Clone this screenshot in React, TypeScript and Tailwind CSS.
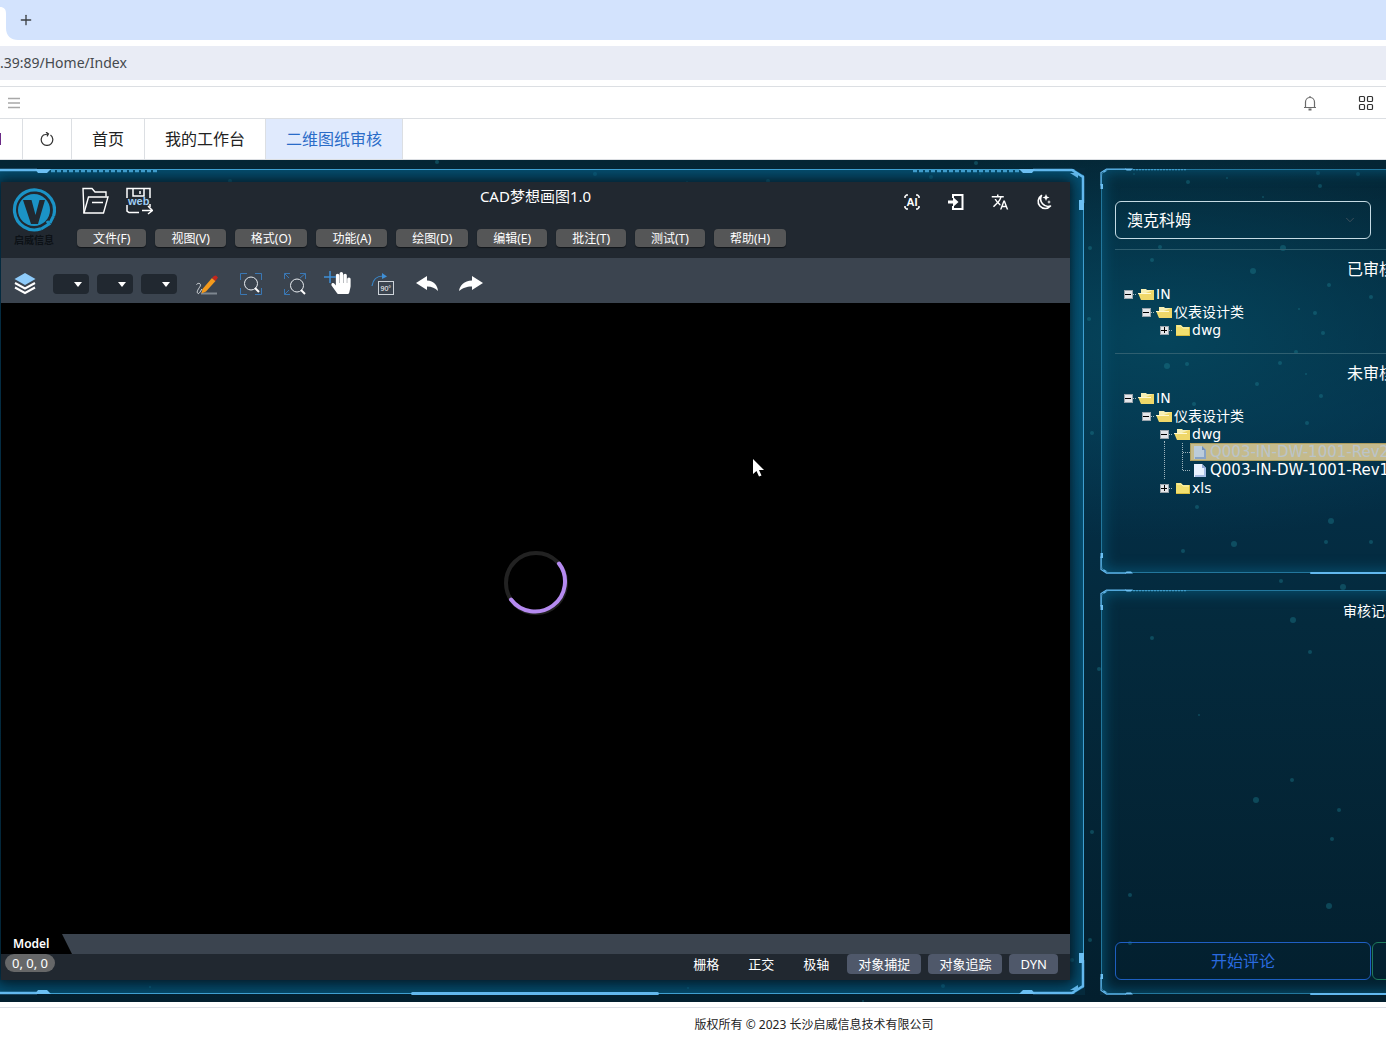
import React from "react";
import { MdTranslate } from "react-icons/md";
import { FaHandPaper } from "react-icons/fa";
import { ChevronDown, Plus } from "lucide-react";

const MENUS = ["文件(F)", "视图(V)", "格式(O)", "功能(A)", "绘图(D)", "编辑(E)", "批注(T)", "测试(T)", "帮助(H)"];

const STATUS = [
  { label: "栅格", on: false },
  { label: "正交", on: false },
  { label: "极轴", on: false },
  { label: "对象捕捉", on: true },
  { label: "对象追踪", on: true },
  { label: "DYN", on: true },
];

interface TreeNode {
  name: string;
  type: "open" | "closed" | "file";
  selected?: boolean;
  children?: TreeNode[];
}

const REVIEWED: TreeNode[] = [
  {
    name: "IN",
    type: "open",
    children: [{ name: "仪表设计类", type: "open", children: [{ name: "dwg", type: "closed" }] }],
  },
];

const PENDING: TreeNode[] = [
  {
    name: "IN",
    type: "open",
    children: [
      {
        name: "仪表设计类",
        type: "open",
        children: [
          {
            name: "dwg",
            type: "open",
            children: [
              { name: "Q003-IN-DW-1001-Rev2", type: "file", selected: true },
              { name: "Q003-IN-DW-1001-Rev1", type: "file" },
            ],
          },
          { name: "xls", type: "closed" },
        ],
      },
    ],
  },
];

// x, y, radius
const STARS = [
  [230, 21, 2], [437, 2, 2], [595, 14, 2], [768, 21, 2], [687, 22, 1], [976, 3, 2], [931, 17, 2], [980, 14, 1],
  [1134, 14, 1], [1188, 22, 2], [1227, 18, 1], [1318, 13, 2], [1358, 14, 2], [1320, 26, 2], [1263, 37, 1],
  [1090, 88, 2], [1160, 87, 2], [1283, 88, 3], [1152, 100, 2], [1253, 111, 3], [1329, 125, 2], [1371, 137, 2],
  [1315, 153, 2], [1323, 173, 2], [1299, 149, 1], [1089, 159, 2], [1187, 204, 2], [1167, 206, 3], [1280, 203, 2],
  [1296, 192, 2], [1306, 214, 1], [1257, 224, 2], [1194, 244, 2], [1321, 236, 2], [1307, 263, 2], [1092, 273, 2],
  [1197, 347, 2], [1331, 361, 3], [1234, 384, 3], [1326, 382, 2], [1371, 382, 2], [1183, 391, 2], [1281, 421, 2],
  [1343, 427, 3], [1293, 460, 3], [1310, 492, 2], [1152, 478, 2], [1099, 509, 2], [1199, 555, 1], [1292, 620, 2],
  [1256, 640, 3], [1339, 650, 2], [1092, 672, 2], [1332, 679, 2], [1130, 735, 2], [1329, 746, 3], [1090, 780, 2],
  [1130, 783, 2], [1072, 800, 2], [943, 826, 2], [150, 827, 1], [688, 828, 1], [863, 841, 1],
];

const CORNERS = [
  { pos: "left-0 top-0", dots: true },
  { pos: "right-0 top-0 -scale-x-100", dots: true },
  { pos: "left-0 bottom-0 -scale-y-100", dots: false },
  { pos: "right-0 bottom-0 -scale-100", dots: false },
];

function Frame({ small = false, className = "", children }: { small?: boolean; className?: string; children: React.ReactNode }) {
  return (
    <div className={`relative ${className}`}>
      <div className="pointer-events-none absolute inset-0">
        <div
          className={`absolute inset-px rounded-lg ${
            small
              ? "border border-[#23779d] shadow-[inset_0_0_14px_2px_#075070]"
              : "border border-[#3f9fd0] shadow-[inset_0_0_20px_6px_#07597f]"
          }`}
        />
        <div
          className={`absolute bottom-0 left-1/2 -translate-x-1/2 rounded-sm bg-[#62b8ee] ${small ? "h-0.5 w-[122px]" : "h-[3px] w-[248px]"}`}
        />
        {CORNERS.map(({ pos, dots }) => (
          <svg
            key={pos}
            viewBox="0 0 180 50"
            className={`absolute ${small ? "h-[25px] w-[90px]" : "h-[50px] w-[180px]"} ${pos}`}
          >
            <path d="M0 0H13L0 8z" fill="#052a3c" />
            <path d="M52 2H13L2 9V35" fill="none" stroke="#62b8ee" strokeWidth="2.5" />
            <path d="M50 1H66L62 5H53zM1 32H6V42H1z" fill="#6cc0f4" />
            <path d="M7 10L7 5H15z" fill="#5fb4e6" />
            {dots && <path d="M66 3H174" stroke="#3f9ccb" strokeWidth="2.5" strokeDasharray="4 2" />}
          </svg>
        ))}
      </div>
      {children}
    </div>
  );
}

function NodeIcon({ type }: { type: TreeNode["type"] }) {
  if (type === "file") {
    return (
      <svg viewBox="0 0 18 18" className="h-[18px] w-[18px] shrink-0">
        <path d="M3 3H11L15 7V16H3z" fill="#e9f2ff" />
        <path d="M11 3L15 7H11z" fill="#8fa7d4" />
        <path d="M14 7V15H4" fill="none" stroke="#a9bfe6" strokeWidth="2" />
      </svg>
    );
  }
  return (
    <svg viewBox="0 0 18 18" className="h-[18px] w-[18px] shrink-0">
      {type === "open" ? (
        <>
          <path d="M4 4H9L10 5H16V14H4z" fill="#f7efb4" />
          <path d="M1 8H14L17 15H4z" fill="#f2dc6c" />
          <path d="M16 5H17V15H4V10z" fill="#efd769" />
          <path d="M1 8.5H14" stroke="#fff8d0" />
        </>
      ) : (
        <>
          <path d="M3 4H8L10 6H17V15H3z" fill="#f2df6f" />
          <path d="M3 14.5H17M16.5 6V15" stroke="#d9bd3f" />
          <path d="M4 5H8L10 7H16" fill="none" stroke="#fbf3b8" />
        </>
      )}
    </svg>
  );
}

function Expander({ open }: { open: boolean }) {
  return (
    <svg viewBox="0 0 18 18" className="h-[18px] w-[18px] shrink-0" shapeRendering="crispEdges">
      <path d="M14 9.5H18" stroke="#9fb4bd" strokeDasharray="1 1" />
      <rect x="5" y="5" width="8" height="8" fill="#e4e6ea" stroke="#9aa4ac" />
      <path d={open ? "M6 9.5H12" : "M6 9.5H12M9.5 6V12"} stroke="#000" />
    </svg>
  );
}

function Tree({ nodes }: { nodes: TreeNode[] }) {
  return (
    <ul>
      {nodes.map((node, i) => {
        const last = i === nodes.length - 1;
        return (
          <li key={node.name} className="relative">
            {!last && node.children && (
              <span className="absolute bottom-0 left-[9px] top-4 border-l border-dotted border-[#9fb4bd]" />
            )}
            <div className="flex h-[18px] items-center">
              {node.type === "file" ? (
                <svg viewBox="0 0 18 18" className="h-[18px] w-[18px] shrink-0" shapeRendering="crispEdges">
                  <path d={last ? "M9.5 0V9.5H18" : "M9.5 0V18M9.5 9.5H18"} fill="none" stroke="#9fb4bd" strokeDasharray="1 1" />
                </svg>
              ) : (
                <Expander open={node.type === "open"} />
              )}
              <a
                href="#"
                className={`flex h-4 items-center whitespace-nowrap ${node.type === "file" ? "text-[15px]" : "text-sm"} ${
                  node.selected ? "bg-[#f5dc9c] text-[#e8e8e8] opacity-80 outline outline-[#d8b865]" : "text-white"
                }`}
              >
                <NodeIcon type={node.type} />
                <span className="pl-px">{node.name}</span>
              </a>
            </div>
            {node.children && (
              <div className="pl-[18px]">
                <Tree nodes={node.children} />
              </div>
            )}
          </li>
        );
      })}
    </ul>
  );
}

function CompanyLogo() {
  return (
    <div className="row-span-2 flex flex-col items-center pr-2.5 pt-1.5">
      <svg viewBox="0 0 44 44" className="h-11 w-11">
        <path d="M41.500 28A20 20 0 1 0 29 40.800" fill="none" stroke="#1b93c6" strokeWidth="3.200" />
        <path d="M29 41L37 36L35 33" fill="none" stroke="#1b93c6" strokeWidth="3" />
        <path d="M41.500 28L38 35" stroke="#1b93c6" strokeWidth="3" />
        <circle cx="22" cy="22" r="16" fill="#1b93c6" />
        <path d="M11 12H19.500L23.500 27L27.500 12H33L26 36H19z" fill="#212830" />
      </svg>
      <span className="text-[10px] font-bold leading-4 text-[#0c1116]">启威信息</span>
    </div>
  );
}

function CadHeader() {
  return (
    <header className="grid h-[76px] grid-cols-[76px_1fr_auto_1fr_76px] grid-rows-[47px_auto] bg-[#212830] text-white">
      <CompanyLogo />
      <div className="flex items-start gap-4 pl-1 pt-[5px]">
        <button aria-label="打开">
          <svg viewBox="0 0 28 28" className="h-7 w-7" fill="none" stroke="#fff" strokeWidth="1.4">
            <path d="M3 26L2 1.500H11L14 5H25V9.500" />
            <path d="M3 26L7.500 10H27L22.500 26zM11 15.500H22" />
          </svg>
        </button>
        <button aria-label="保存到web">
          <svg viewBox="0 0 28 28" className="h-7 w-7" fill="none" stroke="#fff" strokeWidth="1.5">
            <path d="M2 11V1.500H25V11M2 18V24L4 25.500H14M25 17V20" />
            <path d="M8 1.500V9H19V1.500M15 4V7M17 23.500H27M23 19L27.500 23.500L23 27" />
            <text x="3" y="18" fontSize="11" fontWeight="bold" fill="#9fcdf2" stroke="none" fontFamily="Liberation Sans">web</text>
          </svg>
        </button>
      </div>
      <h1 className="pt-1 text-[15px] leading-5">CAD梦想画图1.0</h1>
      <div className="col-span-2 flex h-10 items-center justify-end pr-1">
        <button aria-label="AI" className="flex w-11 justify-center">
          <svg viewBox="0 0 18 18" className="h-[18px] w-[18px]" fill="none" stroke="#fff" strokeWidth="1.6">
            <path d="M2 5V3.500L3.500 2H5M13 2H14.500L16 3.500V5M16 13V14.500L14.500 16H13M5 16H3.500L2 14.500V13" />
            <text x="3.500" y="13" fontSize="11" fontWeight="bold" fill="#fff" stroke="none" fontFamily="Liberation Sans">AI</text>
          </svg>
        </button>
        <button aria-label="登录" className="flex w-11 justify-center">
          <svg viewBox="0 0 18 18" className="h-[18px] w-[18px]">
            <path d="M6 5V2H15.500V16H6V13" fill="none" stroke="#fff" strokeWidth="2" />
            <path d="M1 7.500H6V4L11.500 9L6 14V10.500H1z" fill="#fff" />
          </svg>
        </button>
        <button aria-label="语言" className="flex w-11 justify-center">
          <MdTranslate size={18} />
        </button>
        <button aria-label="主题" className="flex w-11 justify-center">
          <svg viewBox="0 0 18 18" className="h-[18px] w-[18px]">
            <path d="M6.500 2.500A7 7 0 1 0 15.500 13A7.500 7.500 0 0 1 6.500 2.500z" fill="none" stroke="#fff" strokeWidth="1.600" strokeLinejoin="round" />
            <path d="M11 1L12 3.500L14.500 4.500L12 5.500L11 8L10 5.500L7.500 4.500L10 3.500zM14 7L14.600 8.400L16 9L14.600 9.600L14 11L13.400 9.600L12 9L13.400 8.400z" fill="#fff" />
          </svg>
        </button>
      </div>
      <nav className="col-span-4 flex items-start gap-[9px]">
        {MENUS.map((menu) => (
          <button key={menu} className="h-[18px] rounded bg-[#555657] px-4 text-xs leading-5 shadow-[0_1px_1px_#11151a]">
            {menu}
          </button>
        ))}
      </nav>
    </header>
  );
}

function Tool({ label, children }: { label: string; children: React.ReactNode }) {
  return (
    <button aria-label={label} className="flex w-11 justify-center">
      {children}
    </button>
  );
}

function Toolbar() {
  return (
    <div className="flex h-[45px] items-center bg-[#3b444f] pt-1.5">
      <button aria-label="图层" className="flex w-12 justify-center">
        <svg viewBox="0 0 24 24" className="h-6 w-6">
          <path d="M12 1L22.500 7L12 13L1.500 7z" fill="#8ecbfa" />
          <path d="M2 11L12 16.500L22 11M2 15.500L12 21L22 15.500" fill="none" stroke="#fff" strokeWidth="2" />
        </svg>
      </button>
      {["颜色", "线型", "线宽"].map((label) => (
        <div key={label} className="relative mx-1 h-5 w-9">
          <select aria-label={label} className="h-full w-full appearance-none rounded bg-[#212830]" />
          <span className="pointer-events-none absolute right-[7px] top-2 border-x-4 border-t-[5px] border-x-transparent border-t-white" />
        </div>
      ))}
      <div className="ml-1 flex">
        <Tool label="绘制">
          <svg viewBox="0 0 24 24" className="h-6 w-6">
            <path d="M6 21.500H22" stroke="#7e8790" strokeWidth="2" />
            <path d="M1.500 12.500C4 10 6.500 12 5 14.500C3.500 17 1 20 3 21.500C4 22 5 20 7 17" fill="none" stroke="#dfe3e6" />
            <path d="M17 6L20.500 9L11 19.500L6.500 21.500L7.500 17z" fill="#f39a1d" />
            <path d="M19 4L21 3.500L23 5.500L20.500 9L17 6z" fill="#c1271d" />
          </svg>
        </Tool>
        <Tool label="窗口缩放">
          <svg viewBox="0 0 24 24" className="h-6 w-6" fill="none">
            <path d="M1.500 8V1.500H8M16 1.500H22.500V8M22.500 16V22.500H16M8 22.500H1.500V16" stroke="#3a78b5" />
            <circle cx="12" cy="11.500" r="6.500" stroke="#e8ecf0" />
            <path d="M16 16L20 20" stroke="#fff" strokeWidth="2" />
          </svg>
        </Tool>
        <Tool label="范围缩放">
          <svg viewBox="0 0 24 24" className="h-6 w-6" fill="none">
            <path d="M1.500 7V1.500H7M1.500 1.500L6 6M17 1.500H22.500V7M22.500 1.500L17 6M1.500 17V22.500H7M1.500 22.500L6 18" stroke="#3a78b5" />
            <circle cx="14" cy="13.500" r="6.500" stroke="#e8ecf0" />
            <path d="M18 18L22 22" stroke="#fff" strokeWidth="2" />
          </svg>
        </Tool>
        <Tool label="平移">
          <span className="relative">
            <FaHandPaper size={22} className="ml-1 text-white" />
            <svg viewBox="0 0 12 12" className="absolute -left-0.5 -top-px h-3 w-3">
              <path d="M6 0V12M0 6H12" stroke="#3f8fd6" strokeWidth="1.500" />
            </svg>
          </span>
        </Tool>
        <Tool label="旋转90°">
          <svg viewBox="0 0 24 24" className="h-6 w-6" fill="none">
            <path d="M1 14C2 7 6 4 12 4" stroke="#3a86c8" strokeWidth="1.200" />
            <path d="M11 1L16 4.500L11 7z" fill="#3f8fd6" />
            <rect x="7.500" y="9.500" width="15" height="13" stroke="#cdd3d9" />
            <text x="9.500" y="18.500" fontSize="7" fill="#fff" fontFamily="Liberation Sans">90°</text>
          </svg>
        </Tool>
        <Tool label="撤销">
          <svg viewBox="0 0 24 24" className="h-6 w-6" fill="#fff">
            <path d="M1 11L12 4V8.500C19 9 22.500 13 23 19C20 16 17 14.500 12 14.500V18z" />
          </svg>
        </Tool>
        <Tool label="重做">
          <svg viewBox="0 0 24 24" className="h-6 w-6" fill="#fff">
            <path d="M24 11L13 4V8.500C5 9 1 13 0 19C4 16 7 14.500 13 14.500V18z" />
          </svg>
        </Tool>
      </div>
    </div>
  );
}

function CadEditor() {
  return (
    <div className="relative flex flex-1 flex-col shadow-[0_0_8px_#06202e]">
      <CadHeader />
      <Toolbar />
      <main className="relative flex flex-1 items-center justify-center bg-black pb-[72px]">
        <svg viewBox="0 0 64 64" className="h-16 w-16" fill="none" strokeWidth="4">
          <circle cx="32" cy="32" r="30" stroke="#222" />
          <path d="M55 12.500A30 30 0 1 1 7 48.500" stroke="#b58af0" strokeLinecap="round" />
        </svg>
        <svg viewBox="0 0 12 18" className="absolute left-[752px] top-[156px] h-[18px] w-3">
          <path d="M0 0V15L3.500 12L6 17.500L8.500 16.500L6 11H11z" fill="#fff" />
        </svg>
      </main>
      <div className="flex h-5 bg-[#3b444f]">
        <button className="h-5 w-[71px] bg-black pl-3 text-left text-xs font-semibold leading-5 text-white [clip-path:polygon(0_0,61px_0,100%_100%,0_100%)]">
          Model
        </button>
      </div>
      <footer className="flex h-[26px] items-start justify-between bg-[#212830] pl-1 pr-3 text-white">
        <span className="rounded-full bg-[#666768] px-[7px] text-[13px] leading-[18px]">0, 0, 0</span>
        <div className="flex gap-[7px]">
          {STATUS.map(({ label, on }) => (
            <button key={label} className={`h-5 rounded px-[11px] text-[13px] leading-5 ${on ? "bg-[#4f586a]" : ""}`}>
              {label}
            </button>
          ))}
        </div>
      </footer>
    </div>
  );
}

function ReviewColumn() {
  return (
    <aside className="w-[286px] shrink-0 overflow-hidden">
      <div className="grid h-full w-[542px] grid-rows-2 gap-[15px]">
        <Frame small className="px-[15px] pt-[33px]">
          <div className="relative w-64">
            <select
              aria-label="公司"
              className="h-[38px] w-full appearance-none rounded-md border border-[#c5dbe4] bg-transparent pl-[11px] text-base leading-6 text-white"
            >
              <option>澳克科姆</option>
            </select>
            <ChevronDown size={14} strokeWidth={1.5} className="pointer-events-none absolute right-3.5 top-3 text-[#45545f]" />
          </div>
          <hr className="mt-2.5 border-[#2f5f70]" />
          <h2 className="mb-1 mt-[7px] text-center text-base leading-6 text-white">已审核</h2>
          <div className="pb-3.5 pl-1 font-['DejaVu_Sans','Noto_Sans_CJK_SC',sans-serif]">
            <Tree nodes={REVIEWED} />
          </div>
          <hr className="border-[#2f5f70]" />
          <h2 className="mb-1 mt-[7px] text-center text-base leading-6 text-white">未审核</h2>
          <div className="pl-1 font-['DejaVu_Sans','Noto_Sans_CJK_SC',sans-serif]">
            <Tree nodes={PENDING} />
          </div>
        </Frame>
        <Frame small className="flex flex-col px-[15px] pb-[15px] pt-3">
          <h2 className="flex-1 text-center text-sm text-white">审核记录</h2>
          <div className="flex">
            <button className="h-[38px] w-64 rounded-md border border-[#1f5fc4] text-base text-[#2a6adf]">开始评论</button>
            <button aria-label="提交" className="ml-px h-[38px] flex-1 rounded-md border border-[#1f7a5c]" />
          </div>
        </Frame>
      </div>
    </aside>
  );
}

function BrowserBar() {
  return (
    <>
      <div className="flex h-10 bg-[#d3e3fd]">
        <svg viewBox="0 0 18 40" className="h-10 w-[18px]">
          <path d="M0 7C4 7 6 9 6 14V28C6 36 11 40 18 40H0z" fill="#fff" />
        </svg>
        <button aria-label="新标签页" className="text-[#3c4043]">
          <Plus size={16} strokeWidth={2} />
        </button>
      </div>
      <div className="mt-1.5 h-[34px] bg-[#e9ecf5]">
        <input
          aria-label="地址"
          readOnly
          value=".39:89/Home/Index"
          className="h-8 w-full bg-transparent text-sm text-[#45494d] outline-none"
        />
      </div>
    </>
  );
}

export default function App() {
  return (
    <div className="flex min-h-screen flex-col overflow-hidden bg-white font-['Noto_Sans','Noto_Sans_CJK_SC',sans-serif]">
      <BrowserBar />

      <div className="mt-1.5 flex h-8 items-center justify-between border-t border-[#dcdfe3] pl-2 pr-3">
        <button aria-label="菜单">
          <svg viewBox="0 0 12 12" className="h-3 w-3" stroke="#a8a8a8" strokeWidth="1.500">
            <path d="M0 1.500H12M0 6H12M0 10.500H12" />
          </svg>
        </button>
        <div className="flex items-center gap-10">
          <button aria-label="通知">
            <svg viewBox="0 0 16 16" className="h-4 w-4" fill="none" stroke="#6a6a6a" strokeWidth="1.200">
              <path d="M3.500 12.500V7A4.500 4.500 0 0 1 12.500 7V12.500M2 12.500H14M8 1V2.500" />
              <path d="M6.500 14.500H9.500" strokeWidth="2" />
            </svg>
          </button>
          <button aria-label="应用">
            <svg viewBox="0 0 16 16" className="h-4 w-4" fill="none" stroke="#333" strokeWidth="1.200">
              <rect x="1.500" y="1.500" width="5" height="5" rx="1" />
              <rect x="9.500" y="1.500" width="5" height="5" rx="1" />
              <rect x="1.500" y="9.500" width="5" height="5" rx="1" />
              <rect x="9.500" y="9.500" width="5" height="5" rx="1" />
            </svg>
          </button>
        </div>
      </div>

      <nav className="flex h-[42px] border-y border-[#dcdfe3] text-base text-[#222]">
        <div className="flex w-[23px] items-center border-r border-[#dcdfe3]">
          <span className="h-3 w-px bg-[#6a2a86]" />
        </div>
        <button aria-label="刷新" className="flex w-[49px] items-center justify-center border-r border-[#dcdfe3]">
          <svg viewBox="0 0 14 14" className="h-3.5 w-3.5" fill="none" stroke="#333" strokeWidth="1.200">
            <path d="M10.500 3A5.800 5.800 0 1 1 3.500 3L8 2M6 0L8.500 2L7 4.400" />
          </svg>
        </button>
        <button className="border-r border-[#dcdfe3] px-5">首页</button>
        <button className="border-r border-[#dcdfe3] px-5">我的工作台</button>
        <button className="border-r border-[#dcdfe3] bg-[#e0eafd] px-5 text-[#2a6cc8]">二维图纸审核</button>
      </nav>

      <div className="relative flex flex-1 gap-[15px] bg-[radial-gradient(ellipse_420px_200px_at_1160px_180px,#05445b,transparent),linear-gradient(180deg,#042534,#04304a_30%,#042a3d_55%,#031f2e)] pb-[7px] pt-2">
        <svg className="pointer-events-none absolute inset-0 h-full w-full">
          {STARS.map(([x, y, r]) => (
            <circle key={`${x}-${y}`} cx={x} cy={y} r={r} fill="#1f8092" opacity="0.4" />
          ))}
        </svg>
        <Frame className="-ml-[15px] flex flex-1 pb-[15px] pl-4 pr-[15px] pt-3.5">
          <CadEditor />
        </Frame>
        <ReviewColumn />
      </div>

      <div className="mt-[5px] h-[33px] border-t border-[#dcdfe6] pl-[242px] text-center text-xs leading-[34px] text-[#222]">
        版权所有 © 2023 长沙启威信息技术有限公司
      </div>
    </div>
  );
}
